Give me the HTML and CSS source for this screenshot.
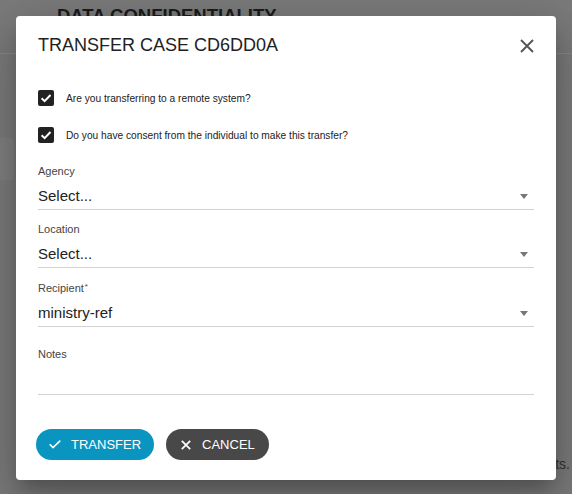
FILE: index.html
```html
<!DOCTYPE html>
<html lang="en">
<head>
<meta charset="utf-8">
<title>Transfer case</title>
<link rel="stylesheet" href="styles.css">
</head>
<body>
<div class="page">
  <header class="page-header">
    <h1 class="page-title">DATA CONFIDENTIALITY</h1>
  </header>
  <div class="page-body">
    <div class="side-card"></div>
    <p class="page-note">Showing all transfer requests.</p>
  </div>
</div>

<div class="backdrop">
  <div class="dialog" role="dialog">
    <div class="dialog-header">
      <h2 class="dialog-title">TRANSFER CASE CD6DD0A</h2>
      <button class="close-btn" aria-label="Close">
        <svg width="14" height="14" viewBox="0 0 14 14"><path d="M1 1 L13 13 M13 1 L1 13" stroke="#555" stroke-width="1.9" fill="none"/></svg>
      </button>
    </div>

    <div class="checks">
      <label class="check-row">
        <span class="checkbox"><svg width="16" height="16" viewBox="0 0 16 16"><path d="M3.6 8.2 L6.6 11.1 L12.5 5" stroke="#fff" stroke-width="2" fill="none"/></svg></span>
        <span class="check-label">Are you transferring to a remote system?</span>
      </label>
      <label class="check-row">
        <span class="checkbox"><svg width="16" height="16" viewBox="0 0 16 16"><path d="M3.6 8.2 L6.6 11.1 L12.5 5" stroke="#fff" stroke-width="2" fill="none"/></svg></span>
        <span class="check-label">Do you have consent from the individual to make this transfer?</span>
      </label>
    </div>

    <div class="fields">
      <div class="field">
        <div class="field-label">Agency</div>
        <div class="select"><span class="select-value">Select...</span><span class="arrow"></span></div>
      </div>
      <div class="field">
        <div class="field-label">Location</div>
        <div class="select"><span class="select-value">Select...</span><span class="arrow"></span></div>
      </div>
      <div class="field">
        <div class="field-label">Recipient<span class="req">*</span></div>
        <div class="select"><span class="select-value">ministry-ref</span><span class="arrow"></span></div>
      </div>
      <div class="field field-notes">
        <div class="field-label">Notes</div>
        <div class="textarea"></div>
      </div>
    </div>

    <div class="actions">
      <button class="btn btn-primary">
        <svg width="12" height="9" viewBox="0 0 12 9"><path d="M0.7 4.3 L4 7.6 L11.3 0.7" stroke="#fff" stroke-width="1.6" fill="none"/></svg>
        <span>TRANSFER</span>
      </button>
      <button class="btn btn-dark">
        <svg width="10" height="10" viewBox="0 0 10 10"><path d="M0.8 0.8 L9.2 9.2 M9.2 0.8 L0.8 9.2" stroke="#fff" stroke-width="1.7" fill="none"/></svg>
        <span>CANCEL</span>
      </button>
    </div>
  </div>
</div>
</body>
</html>
```

FILE: styles.css
```css
* { box-sizing: border-box; }

html, body {
  margin: 0;
  padding: 0;
}

body {
  width: 572px;
  height: 494px;
  overflow: hidden;
  background: #7a7a7a;
  font-family: "Liberation Sans", Arial, sans-serif;
  position: relative;
}

/* underlying page, dimmed by the backdrop */
.page-header {
  height: 54px;
  border-bottom: 1px solid #878787;
}

.page-title {
  margin: 0;
  padding: 4px 0 0 57px;
  font-size: 18.5px;
  line-height: 24px;
  font-weight: bold;
  color: #1c1c1c;
}

.page-body {
  padding-top: 84px;
}

.side-card {
  width: 14px;
  height: 42px;
  background: #7f7f7f;
  border-radius: 0 4px 4px 0;
}

.page-note {
  margin: 275px 0 0;
  padding-right: 2px;
  text-align: right;
  font-size: 14px;
  line-height: 18px;
  color: #333;
  white-space: nowrap;
}

/* dialog */
.backdrop {
  position: absolute;
  inset: 0;
  padding: 16px;
}

.dialog {
  width: 540px;
  height: 464px;
  background: #fff;
  border-radius: 4px;
  padding: 16px 22px 0;
  display: flex;
  flex-direction: column;
  box-shadow: 0 11px 15px -7px rgba(0,0,0,0.2), 0 24px 38px 3px rgba(0,0,0,0.14), 0 9px 46px 8px rgba(0,0,0,0.12);
}

.dialog-header {
  display: flex;
  justify-content: space-between;
  align-items: center;
  height: 24px;
}

.dialog-title {
  margin: 0;
  font-size: 18px;
  line-height: 24px;
  font-weight: normal;
  color: #222;
  padding-top: 1px;
}

.close-btn {
  width: 24px;
  height: 24px;
  padding: 0;
  border: 0;
  background: none;
  display: flex;
  align-items: center;
  justify-content: center;
  margin: 4px -5px 0 0;
}

.checks {
  margin-top: 34px;
  display: flex;
  flex-direction: column;
  gap: 21px;
}

.check-row {
  display: flex;
  align-items: center;
  gap: 12px;
  height: 16px;
}

.checkbox {
  width: 16px;
  height: 16px;
  background: #222;
  border-radius: 2px;
  display: flex;
}

.check-label {
  font-size: 10.2px;
  color: #222;
}

.fields {
  margin-top: 21px;
  display: flex;
  flex-direction: column;
  gap: 12px;
}

.field-label {
  font-size: 11px;
  line-height: 14px;
  color: #444;
  margin-bottom: 3px;
}

.req {
  font-size: 8px;
  vertical-align: 3px;
  margin-left: 1px;
}

.select {
  display: flex;
  align-items: center;
  justify-content: space-between;
  padding: 5px 0 3px;
  border-bottom: 1px solid #d2d2d2;
}

.select-value {
  font-size: 15px;
  line-height: 20px;
  color: #222;
}

.arrow {
  width: 0;
  height: 0;
  border-left: 4.5px solid transparent;
  border-right: 4.5px solid transparent;
  border-top: 5px solid #777;
  margin-right: 6px;
}

.field-notes {
  margin-top: 8px;
}

.textarea {
  height: 31px;
  border-bottom: 1px solid #d2d2d2;
}

.actions {
  margin: 34px 0 0 -2px;
  display: flex;
  gap: 12px;
}

.btn {
  height: 31px;
  border: 0;
  border-radius: 16px;
  display: flex;
  align-items: center;
  color: #fff;
  font-family: "Liberation Sans", Arial, sans-serif;
  font-size: 13px;
  line-height: 16px;
}

.btn-primary {
  background: #0995c0;
  padding: 0 13px 0 13px;
  gap: 10px;
}

.btn-dark {
  background: #484848;
  padding: 0 14px 0 15px;
  gap: 11px;
}
```
